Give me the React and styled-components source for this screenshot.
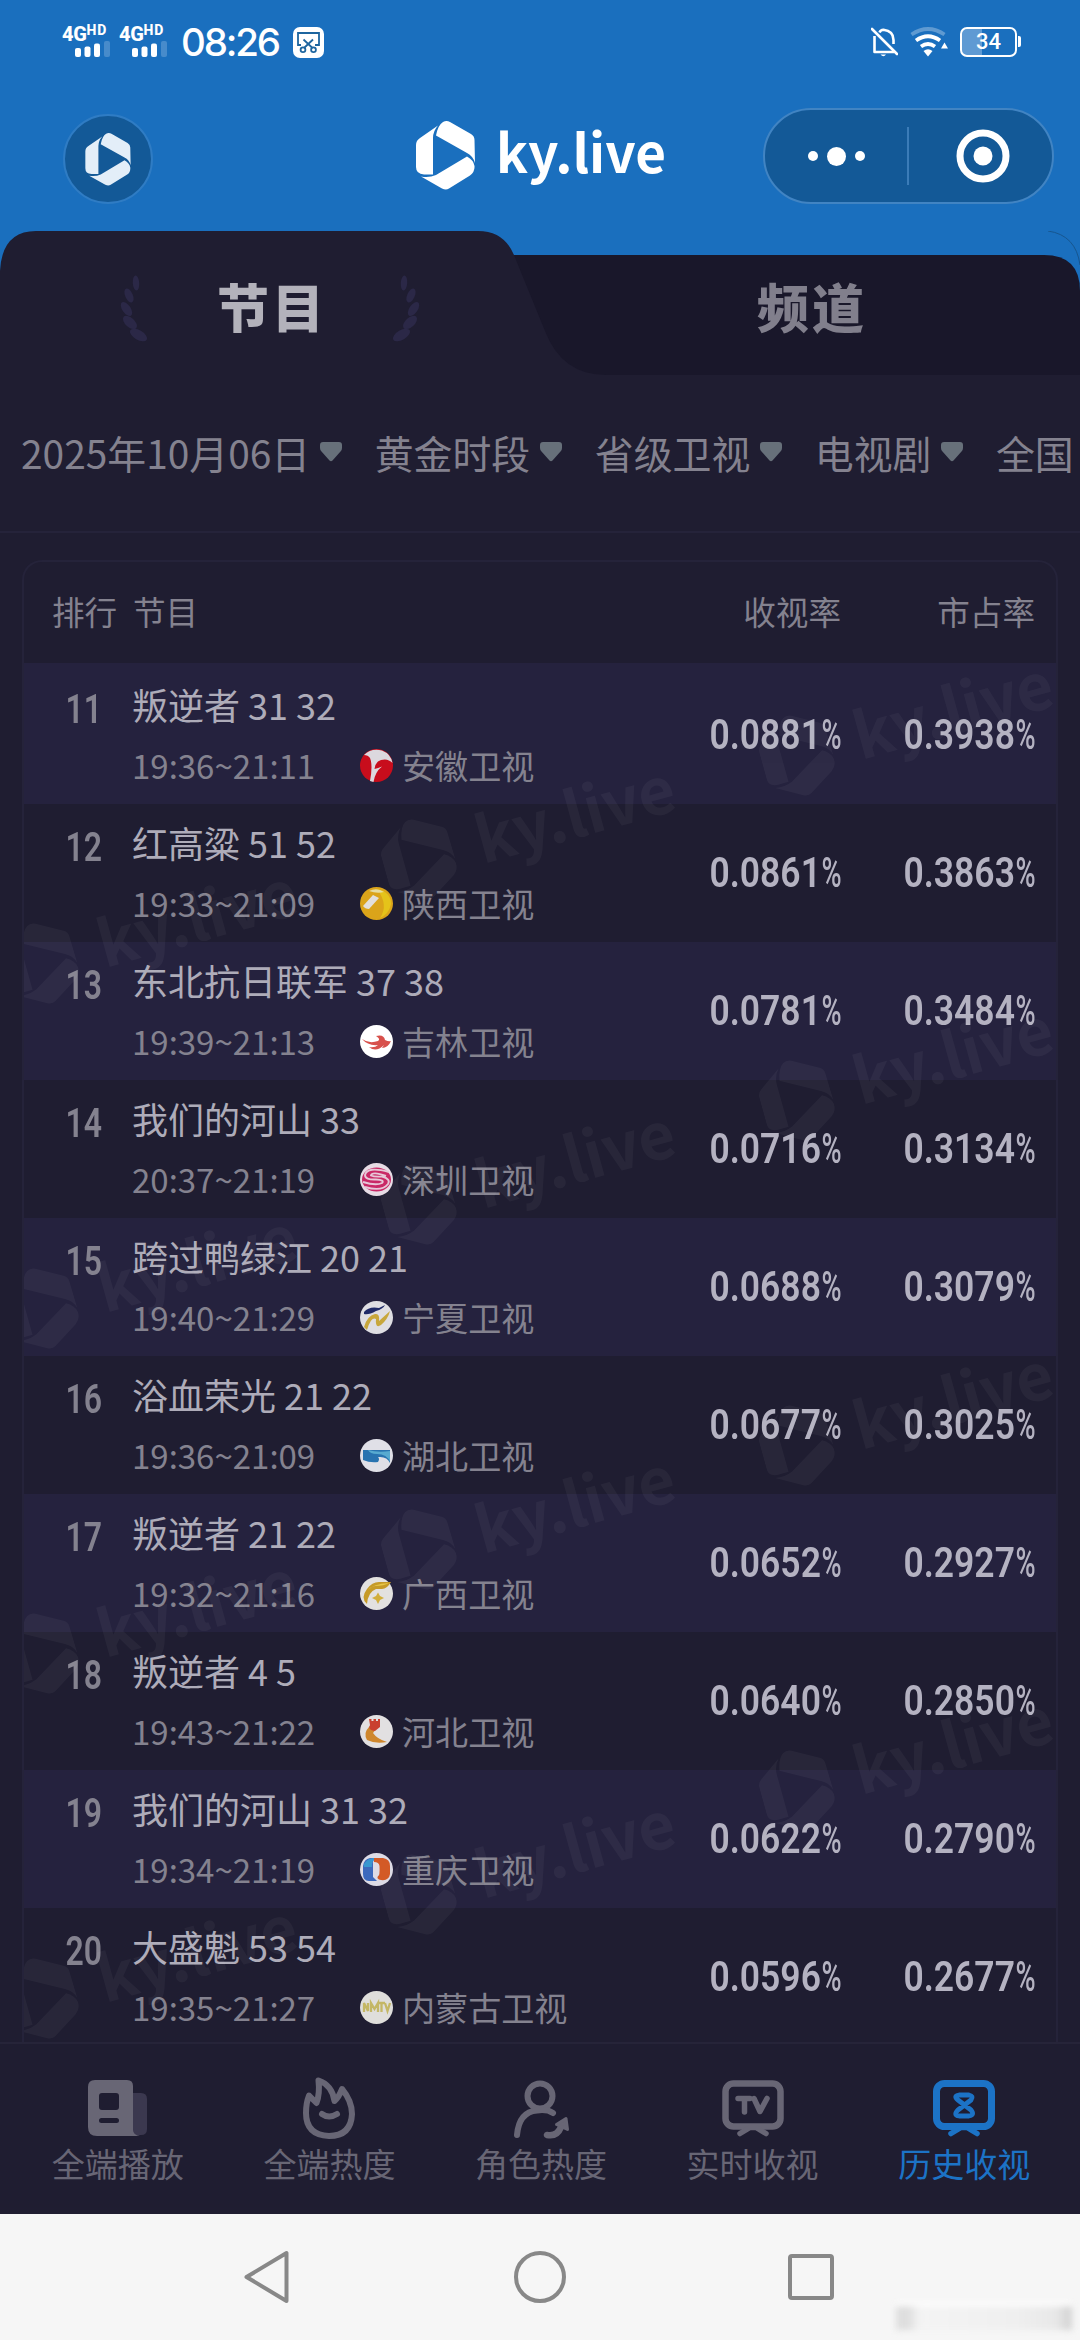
import React from 'react';
import styled, {createGlobalStyle} from 'styled-components';

const theme = {
    blue: '#1a6fbe',
    capsule: '#135997',
    dark: '#1f1d31',
    tabDark: '#19172a',
    stripe: '#25223e',
    line: '#25233a',
    title: '#aeacb9',
    value: '#b4b2c1',
    text: '#84828f',
    muted: '#686675',
    active: '#1c73c6',
}

const GlobalStyle = createGlobalStyle`
    * {
        box-sizing: border-box;
    }
    body {
        margin: 0;
        background: ${theme.dark};
        font-family: 'Noto Sans CJK SC', sans-serif;
    }
    svg {
        display: block;
        flex: none;
    }`

const Phone = styled.div`
    width: 1080px;
    height: 2340px;
    overflow: hidden;
    display: flex;
    flex-direction: column;
    background: ${theme.dark};`

/* ---------- top ---------- */

const StatusBar = styled.div`
    height: 84px;
    padding: 0 63px 0 62px;
    display: flex;
    align-items: center;
    background: ${theme.blue};
    color: #fff;
    > .spacer {
        flex: 1;
    }`

const Signal = styled.div`
    width: 57px;
    height: 34px;
    display: flex;
    flex-direction: column;
    > .net {
        display: flex;
        align-items: flex-start;
        height: 18px;
        font: 800 20px/18px Roboto, sans-serif;
        letter-spacing: -0.3px;
    }
    > .net > sup {
        font-size: 14px;
        line-height: 11px;
        letter-spacing: 0.7px;
        vertical-align: top;
    }
    > svg {
        margin-left: 13px;
        margin-top: -2px;
    }`

const Clock = styled.div`
    width: 117px;
    padding-left: 5px;
    font: 500 38.5px/40px Inter, sans-serif;
    letter-spacing: -2.2px;
    white-space: nowrap;`

const Battery = styled.div`
    position: relative;
    width: 57px;
    height: 30px;
    margin-left: 12px;
    border: 2.5px solid #fff;
    border-radius: 7px;
    background: linear-gradient(90deg, #5f9ad3 20px, transparent 20px);
    font: 500 22px/25px Roboto, sans-serif;
    text-align: center;
    &::after {
        content: '';
        position: absolute;
        right: -6px;
        top: 7px;
        width: 3px;
        height: 11px;
        border-radius: 0 2px 2px 0;
        background: #fff;
    }`

const AppBar = styled.div`
    height: 147px;
    padding: 24px 26px 0 63px;
    display: flex;
    align-items: flex-start;
    background: ${theme.blue};`

const RoundButton = styled.div`
    width: 90px;
    height: 90px;
    margin: 6px 263px 0 0;
    display: flex;
    align-items: center;
    justify-content: center;
    border: 2px solid #2f7cc4;
    border-radius: 50%;
    background: ${theme.capsule};`

const Brand = styled.div`
    width: 248px;
    height: 70px;
    display: flex;
    align-items: center;
    color: #fff;
    white-space: nowrap;
    > span {
        margin: -10px 0 0 21px;
        font: 700 53px/70px 'Noto Sans CJK SC', sans-serif;
    }`

const BrandSlot = styled.div`
    margin-top: 12px;
    margin-right: 99px;`

const Capsule = styled.div`
    width: 291px;
    height: 96px;
    display: flex;
    align-items: center;
    border: 2px solid #4184c3;
    border-radius: 48px;
    background: ${theme.capsule};
    > .dots {
        width: 142px;
        display: flex;
        align-items: center;
        justify-content: center;
        gap: 9px;
    }
    > .bar {
        width: 2px;
        height: 58px;
        background: #3b7cb8;
    }
    > .target {
        flex: 1;
        padding-left: 4px;
        display: flex;
        justify-content: center;
    }`

const Dot = styled.i`
    width: ${p => p.$size}px;
    height: ${p => p.$size}px;
    border-radius: 50%;
    background: #fff;`

/* ---------- tabs ---------- */

const Tabs = styled.div`
    position: relative;
    height: 144px;
    display: flex;
    background: ${theme.blue};
    > svg {
        position: absolute;
        left: 0;
        top: 0;
    }`

const Tab = styled.div`
    position: relative;
    flex: 1;
    height: 144px;
    display: flex;
    align-items: center;
    justify-content: center;
    gap: 62px;
    color: ${p => p.$active ? '#b3b2bb' : '#817f8c'};
    > span {
        margin-top: 6px;
        padding-left: 4px;
        font: 900 52px/60px 'Noto Sans CJK SC', sans-serif;
        letter-spacing: 3px;
    }
    > svg {
        margin-top: 12px;
    }`

const Filters = styled.div`
    height: 158px;
    padding: 0 0 3px 21px;
    display: flex;
    align-items: center;
    gap: 32.5px;
    overflow: hidden;
    border-bottom: 2px solid ${theme.line};
    color: ${theme.text};`

const Filter = styled.div`
    flex: none;
    display: flex;
    align-items: center;
    gap: 10px;
    font-size: 38.88px;
    line-height: 56px;
    white-space: nowrap;`

/* ---------- table ---------- */

const Card = styled.div`
    position: relative;
    height: 1482px;
    margin: 27px 22px 0;
    overflow: hidden;
    border: 2px solid ${theme.line};
    border-bottom: 0;
    border-radius: 20px 20px 0 0;`

const TableHead = styled.div`
    height: 101px;
    padding: 0 21px 3px 28px;
    display: flex;
    align-items: center;
    color: ${theme.text};
    font-size: 32.6px;
    line-height: 48px;
    > .rank {
        width: 81px;
    }
    > .name {
        flex: 1;
    }
    > .num {
        width: 194px;
        text-align: right;
    }`

const Row = styled.div`
    height: ${p => p.$first ? 141 : 138}px;
    padding: ${p => p.$first ? 3 : 0}px 21px 0 0;
    display: flex;
    background: ${p => p.$striped ? theme.stripe : 'transparent'};`

const Rank = styled.div`
    width: 108px;
    padding: 16px 0 0 11px;
    color: ${theme.text};
    font: 600 40px/56px Roboto, sans-serif;
    text-align: center;
    > span {
        display: inline-block;
        transform: scaleX(0.8);
    }`

const Program = styled.div`
    flex: 1;
    padding-top: 11px;
    white-space: nowrap;
    > .title {
        height: 54px;
        margin-bottom: 7px;
        color: ${theme.title};
        font-size: 36px;
        line-height: 54px;
    }
    > .info {
        height: 54px;
        display: flex;
        align-items: center;
        color: ${theme.text};
        font-size: 33.1px;
        line-height: 54px;
    }
    .time {
        width: 228px;
        font-size: 33px;
    }
    svg {
        margin: 1px 9px 0 0;
    }`

const Value = styled.div`
    width: ${p => p.$wide ? 194 : 160}px;
    height: 138px;
    display: flex;
    justify-content: flex-end;
    align-items: center;
    color: ${theme.value};
    font: 600 42px/50px Roboto, sans-serif;
    > span {
        transform: scaleX(0.845);
        transform-origin: right;
    }
    > .unit {
        width: 20.5px;
        display: flex;
        justify-content: flex-end;
        font-weight: 500;
        transform: scaleX(0.65);
    }`

// tilted brand laid over the rows
const Watermark = styled.div`
    position: absolute;
    left: ${p => p.$x - 124}px;
    top: ${p => p.$y - 35}px;
    opacity: 0.04;
    pointer-events: none;
    transform: rotate(-15.5deg) scale(1.2);`

/* ---------- bottom ---------- */

const NavBar = styled.div`
    height: 172px;
    padding: 0 10px 0 12px;
    display: flex;
    border-top: 2px solid #262439;
    background: ${theme.dark};`

const NavItem = styled.div`
    flex: 1;
    padding-top: 32px;
    display: flex;
    flex-direction: column;
    align-items: center;
    color: ${p => p.$active ? theme.active : theme.muted};
    font-size: 33px;
    line-height: 48px;
    > svg {
        margin-bottom: -1px;
    }`

const SystemBar = styled.div`
    position: relative;
    height: 126px;
    padding-left: 133px;
    display: flex;
    align-items: center;
    background: #f6f6f6;
    > div {
        width: 271px;
        display: flex;
        justify-content: center;
    }
    > .back {
        padding-right: 4px;
    }`

const Smudge = styled.span`
    position: absolute;
    right: 8px;
    bottom: 10px;
    width: 176px;
    height: 28px;
    border-top: 4px solid #fff;
    filter: blur(3px);
    background: linear-gradient(90deg, #dedede 12px, #f4f4f4 24px, #efefef 120px, #e8e8e8 160px, #d0d0d0);`

/* ---------- drawings ---------- */

const Hexagon = ({width = 59, height = 69, color = '#fff'}) => (
    <svg width={width} height={height} viewBox="0 0 59 69" fill={color}>
        <path d="M0 24Q0 19.500 4 17L22 4.500Q17 10 17 17V53.500H8Q0 53 0 46Z"/>
        <path d="M20 14.500Q22 4 27 1Q30.500-1 34 1L55 13Q58.500 15 58.500 19L59 42Q57 35 51 32Z"/>
        <path d="M51 35.500Q57.500 39 58.500 45Q59 51 54 54.500L33 67.500Q30 69.500 26 67.500L5 55.500Q13 57 20 54Z"/>
    </svg>
)

const Bars = () => (
    <svg width="36" height="16" viewBox="0 0 36 16" fill="#fff">
        <rect x="0" y="7" width="6" height="9" rx="2"/>
        <rect x="9.500" y="5.500" width="6" height="10.500" rx="2"/>
        <rect x="19" y="2.500" width="6" height="13.500" rx="2"/>
        <rect x="29" y="0" width="6" height="16" rx="2" opacity="0.2"/>
    </svg>
)

const Scissors = () => (
    <svg width="31" height="31" viewBox="0 0 31 31" fill="none" stroke="#1d659f" strokeWidth="1.800">
        <rect width="31" height="31" rx="7" fill="#fff" stroke="none"/>
        <path d="M8 18H5V6H26V18H22M10.500 12.500L19.500 21M20 12.500L11 21"/>
        <circle cx="10" cy="22.800" r="2.400"/>
        <circle cx="20.500" cy="22.800" r="2.400"/>
    </svg>
)

const Muted = () => (
    <svg width="27" height="30" viewBox="0 0 27 30" fill="none" stroke="#fff" strokeWidth="2.600">
        <path d="M1 2L26 27" strokeLinecap="round"/>
        <path d="M3.500 9V25H23M8.500 5.500Q9.500 3 12.500 2.800Q22.500 4 22.500 13V17" strokeLinejoin="round"/>
        <path d="M9.500 27.500H15Q12.500 31 9.500 27.500Z" fill="#fff" stroke="none"/>
    </svg>
)

const Wifi = () => (
    <svg width="38" height="30" viewBox="0 0 38 30" fill="none" stroke="#fff" strokeWidth="3.800">
        <path d="M1.500 7.500Q18 -3.500 34.500 7.500" opacity="0.3"/>
        <path d="M6 13.500Q18 5 30 13.500"/>
        <path d="M11 19.500Q18 14.500 25 19.500"/>
        <path d="M13.500 24Q18 20.500 22.500 24L18 29.500Z" fill="#fff" stroke="none"/>
        <path d="M34.500 15.500L38 21.500H31Z" fill="#fff" stroke="none"/>
    </svg>
)

const Laurel = ({flip}) => (
    <svg width="32" height="72" viewBox="0 0 32 72" fill="#2b2847">
        <g transform={flip ? 'translate(32 0) scale(-1 1)' : undefined}>
            <ellipse cx="17" cy="10" rx="3.200" ry="7.500" transform="rotate(-4 17 10)"/>
            <ellipse cx="10" cy="22.500" rx="3.800" ry="7.500" transform="rotate(-24 10 22.500)"/>
            <ellipse cx="7.500" cy="36" rx="4.200" ry="8" transform="rotate(-34 7.500 36)"/>
            <ellipse cx="11" cy="49.500" rx="4.600" ry="8.500" transform="rotate(-48 11 49.500)"/>
            <ellipse cx="19.500" cy="62" rx="4.800" ry="9.500" transform="rotate(-60 19.500 62)"/>
        </g>
    </svg>
)

const Arrow = () => (
    <svg width="22" height="20" viewBox="0 0 22 20">
        <path d="M3 0H19Q22 0 22 3V6Q22 8 20.500 9.500L12.500 18.500Q11 20 9.500 18.500L1.500 9.500Q0 8 0 6V3Q0 0 3 0Z" fill="#67707a"/>
    </svg>
)

const TabShape = () => (
    <svg width="1080" height="144" viewBox="0 0 1080 144">
        <path d="M480 24H1044Q1080 24 1080 60V144H480Z" fill={theme.tabDark}/>
        <path d="M0 144V40Q2 0 36 0H478Q504 0 514 24L545 100Q562 144 606 144Z" fill={theme.dark}/>
        <path d="M1048 0Q1076 4 1080 34" fill="none" stroke="#17568f" strokeWidth="1"/>
    </svg>
)

const channelMarks = {
    安徽卫视: <>
        <circle cx="16.500" cy="16.500" r="16.500" fill="#c80d1c"/>
        <path d="M4 6Q11-1 22 1.500Q31 5 32.500 14Q28 9 21 11Q15 13 14.500 20Q18 19 22 17.500Q15 23 13.500 33L10 32Q13 16 10 9Q8 6 4 6Z" fill="#dcd8de"/>
    </>,
    陕西卫视: <>
        <circle cx="16.500" cy="16.500" r="16.500" fill="#dba41a"/>
        <path d="M17 2Q31 5 31 17Q29 27 20 31Q29 18 17 2Z" fill="#e5c31a"/>
        <path d="M9 4Q17 0 24 5Q17 7 9 4Z" fill="#e6dda3"/>
        <path d="M3 19L13 8L19 11L9 22Q5 22 3 19Z" fill="#e2dfdb"/>
    </>,
    吉林卫视: <>
        <circle cx="16.500" cy="16.500" r="16.500" fill="#fff"/>
        <path d="M2 14Q9 19 18 16Q21 14 16 11Q24 9 25 15Q29 17 31 16Q28 23 22 23L24 20Q16 28 9 22Q15 23 18 20Q8 21 2 14Z" fill="#d8504b"/>
    </>,
    深圳卫视: <>
        <circle cx="16.500" cy="16.500" r="16.500" fill="#e7dce5"/>
        <ellipse cx="16.500" cy="16.500" rx="14.500" ry="12" fill="#c92866"/>
        <path d="M29 9Q7 3 5 12Q5 17 16 16.500Q25 17 22 20Q16 23 3 19M26 13Q12 8 11 12.500Q14 14 22 13.500Q31 16 28 21Q22 29 5 24" fill="none" stroke="#e7c7d8" strokeWidth="1.900"/>
    </>,
    宁夏卫视: <>
        <circle cx="16.500" cy="16.500" r="16.500" fill="#dfdee3"/>
        <path d="M4 11Q9 5 19 7L25 4Q23 8 16 10Q9 14 4 13Z" fill="#202a68"/>
        <path d="M4 26Q7 15 15 13Q20 12 19 20L30 10Q28 18 21 24Q15 28 16 18Q11 15 7 29Z" fill="#c8a73c"/>
    </>,
    湖北卫视: <>
        <circle cx="16.500" cy="16.500" r="16.500" fill="#e0e0e7"/>
        <path d="M3 11H30V24Q27 17 18 18Q20 20 18 23Q10 24 3 21Z" fill="#2873b0"/>
        <path d="M8 11Q18 14 30 12V23Q27 15 17 15Q10 15 8 11Z" fill="#57aad0"/>
    </>,
    广西卫视: <>
        <circle cx="16.500" cy="16.500" r="16.500" fill="#e3e1df"/>
        <path d="M7 27Q0 21 7 12Q12 5 19 5H31Q27 12 22 12H16Q8 15 7 27Z" fill="#c69a27"/>
        <path d="M8 13Q13 7 29 6Q24 9 15 9Q10 10 8 13Z" fill="#e7c847"/>
        <path d="M18 15.500L20 19L24 21L20 23L18 27L16 23L12 21L16 19Z" fill="#d2ae3b"/>
    </>,
    河北卫视: <>
        <circle cx="16.500" cy="16.500" r="16.500" fill="#e2e0e1"/>
        <path d="M9 12Q3 18 7 25Q15 29 27 27Q17 24 13 18L19 10H11Z" fill="#cf872d"/>
        <path d="M9 4H11.500V6H13.500V4H16V6H18V4H20V12L15 16Q7 15 10 10Z" fill="#c9402f"/>
    </>,
    重庆卫视: <>
        <circle cx="16.500" cy="16.500" r="16.500" fill="#dddbe5"/>
        <path d="M10 5H17Q12 7 13 11V24L17 28H9Q3 28 3 21V13Q4 6 10 5Z" fill="#3c69bd"/>
        <path d="M4 11Q8 4 16 5Q11 8 12 14H4Z" fill="#3897cf"/>
        <path d="M14 5H23Q30 6 30 13V21Q29 28 21 27Q16 26 18 23Q20 23 19.500 13Q19 9 14 9Z" fill="#d35a26"/>
    </>,
    内蒙古卫视: <>
        <circle cx="16.500" cy="16.500" r="16.500" fill="#dfdedb"/>
        <path d="M4 21V12L8 20V12M11 21V12L14.500 18L18 12V21M18 12H25M21.500 12V21M25 12L27.500 20L30 12" fill="none" stroke="#c4b765" strokeWidth="2.300"/>
    </>,
}

const navIcons = {
    全端播放: <>
        <path d="M46 17H54Q60 17 60 23V53Q60 59 54 59H40Z" fill="#3b384f"/>
        <path fillRule="evenodd" d="M8 4H40Q46 4 46 10V54Q46 59 53 60H10Q1 60 1 51V11Q1 4 8 4ZM15 17Q12 17 12 20V31Q12 34 15 34H29Q32 34 32 31V20Q32 17 29 17ZM14.500 42Q12 42 12 44.500T14.500 47H29.500Q32 47 32 44.500T29.500 42Z" fill="currentColor"/>
    </>,
    全端热度: <g fill="none" stroke="currentColor" strokeWidth="6" strokeLinecap="round" strokeLinejoin="round">
        <path d="M20.500 4.500Q34 9 36.500 25Q41 21 44 13Q54 25 54 38Q53 60 31 60Q8 59 8 37Q8 27 11 19.500L18.500 27Q22 18 20.500 4.500Z"/>
        <path d="M24 38Q31 43 39 38"/>
    </g>,
    角色热度: <g fill="none" stroke="currentColor" strokeWidth="6" strokeLinecap="round" strokeLinejoin="round">
        <circle cx="30" cy="20" r="12.500"/>
        <path d="M7 59Q9 36 27 34.500Q37 33 43 37"/>
        <path d="M37 59Q47 61 51 51" strokeWidth="6.500"/>
        <path d="M56 42.500L57.500 53.500L46.500 48.500Z" fill="currentColor" strokeWidth="3"/>
    </g>,
    实时收视: <g fill="none" stroke="currentColor" strokeWidth="6.500" strokeLinecap="round" strokeLinejoin="round">
        <rect x="3.500" y="7.500" width="55" height="43" rx="8"/>
        <path d="M18 57.500L28 51.500H34L44 57.500" strokeWidth="5.500"/>
        <path d="M16 22.500H28M22.500 22.500V36M32 22.500L38 35.500L45 22.500" strokeWidth="5.500"/>
    </g>,
    历史收视: <g fill="none" stroke="currentColor" strokeWidth="7" strokeLinecap="round" strokeLinejoin="round">
        <rect x="3.500" y="7.500" width="55" height="43" rx="8"/>
        <path d="M18 57.500L28 51.500H34L44 57.500" strokeWidth="5.500"/>
        <path d="M26 19H36Q41 20 38 24L25 34Q20 39 26 40H36Q42 39 38 34L25 24Q20 20 26 19Z" strokeWidth="4.800"/>
    </g>,
}

/* ---------- data ---------- */

const filters = ['2025年10月06日', '黄金时段', '省级卫视', '电视剧', '全国']

const programs = [
    {rank: 11, title: '叛逆者 31 32', time: '19:36~21:11', channel: '安徽卫视', rating: '0.0881', share: '0.3938'},
    {rank: 12, title: '红高粱 51 52', time: '19:33~21:09', channel: '陕西卫视', rating: '0.0861', share: '0.3863'},
    {rank: 13, title: '东北抗日联军 37 38', time: '19:39~21:13', channel: '吉林卫视', rating: '0.0781', share: '0.3484'},
    {rank: 14, title: '我们的河山 33', time: '20:37~21:19', channel: '深圳卫视', rating: '0.0716', share: '0.3134'},
    {rank: 15, title: '跨过鸭绿江 20 21', time: '19:40~21:29', channel: '宁夏卫视', rating: '0.0688', share: '0.3079'},
    {rank: 16, title: '浴血荣光 21 22', time: '19:36~21:09', channel: '湖北卫视', rating: '0.0677', share: '0.3025'},
    {rank: 17, title: '叛逆者 21 22', time: '19:32~21:16', channel: '广西卫视', rating: '0.0652', share: '0.2927'},
    {rank: 18, title: '叛逆者 4 5', time: '19:43~21:22', channel: '河北卫视', rating: '0.0640', share: '0.2850'},
    {rank: 19, title: '我们的河山 31 32', time: '19:34~21:19', channel: '重庆卫视', rating: '0.0622', share: '0.2790'},
    {rank: 20, title: '大盛魁 53 54', time: '19:35~21:27', channel: '内蒙古卫视', rating: '0.0596', share: '0.2677'},
]

const navs = ['全端播放', '全端热度', '角色热度', '实时收视', '历史收视']

// three columns, each one lower than the next by the same slope
const watermarks = [0, 1, 2, 3].flatMap(i => [
    [882, 163 + i * 345],
    [504, 267 + i * 345],
    [126, 371 + i * 345],
])

const Logo = () => (
    <Brand>
        <Hexagon/>
        <span>ky.live</span>
    </Brand>
)

const Percent = ({value, wide}) => (
    <Value $wide={wide}>
        <span>{value}</span>
        <span className={'unit'}>%</span>
    </Value>
)

export default function App() {
    return (
        <Phone>
            <GlobalStyle/>
            <StatusBar>
                <Signal><div className={'net'}>4G<sup>HD</sup></div><Bars/></Signal>
                <Signal><div className={'net'}>4G<sup>HD</sup></div><Bars/></Signal>
                <Clock>08:26</Clock>
                <Scissors/>
                <div className={'spacer'}/>
                <Muted/>
                <div style={{width: 12}}/>
                <Wifi/>
                <Battery>34</Battery>
            </StatusBar>

            <AppBar>
                <RoundButton><Hexagon width={46} height={53} color={'#e3eef8'}/></RoundButton>
                <BrandSlot><Logo/></BrandSlot>
                <Capsule>
                    <div className={'dots'}><Dot $size={10}/><Dot $size={19}/><Dot $size={10}/></div>
                    <div className={'bar'}/>
                    <div className={'target'}>
                        <svg width="54" height="54" viewBox="0 0 54 54">
                            <circle cx="27" cy="27" r="23" fill="none" stroke="#fff" strokeWidth="7"/>
                            <circle cx="27" cy="27" r="9.500" fill="#fff"/>
                        </svg>
                    </div>
                </Capsule>
            </AppBar>

            <Tabs>
                <TabShape/>
                <Tab $active><Laurel/><span>节目</span><Laurel flip/></Tab>
                <Tab><span>频道</span></Tab>
            </Tabs>

            <Filters>
                {filters.map(f => <Filter key={f}>{f}<Arrow/></Filter>)}
            </Filters>

            <Card>
                <TableHead>
                    <div className={'rank'}>排行</div>
                    <div className={'name'}>节目</div>
                    <div className={'num'}>收视率</div>
                    <div className={'num'}>市占率</div>
                </TableHead>
                {programs.map((item, i) => (
                    <Row key={item.rank} $first={i === 0} $striped={i % 2 === 0}>
                        <Rank><span>{item.rank}</span></Rank>
                        <Program>
                            <div className={'title'}>{item.title}</div>
                            <div className={'info'}>
                                <div className={'time'}>{item.time}</div>
                                <svg width="33" height="33" viewBox="0 0 33 33">{channelMarks[item.channel]}</svg>
                                {item.channel}
                            </div>
                        </Program>
                        <Percent value={item.rating}/>
                        <Percent value={item.share} wide/>
                    </Row>
                ))}
                {watermarks.map(([x, y]) => (
                    <Watermark key={`${x}-${y}`} $x={x} $y={y}><Logo/></Watermark>
                ))}
            </Card>

            <NavBar>
                {navs.map(name => (
                    <NavItem key={name} $active={name === '历史收视'}>
                        <svg width="62" height="64" viewBox="0 0 62 64">{navIcons[name]}</svg>
                        {name}
                    </NavItem>
                ))}
            </NavBar>

            <SystemBar>
                <div className={'back'}>
                    <svg width="46" height="54" viewBox="0 0 46 54">
                        <path d="M42.500 3V51L2.500 27Z" fill="none" stroke="#888" strokeWidth="4" strokeLinejoin="round"/>
                    </svg>
                </div>
                <div>
                    <svg width="54" height="54" viewBox="0 0 54 54">
                        <circle cx="27" cy="27" r="24" fill="none" stroke="#888" strokeWidth="4"/>
                    </svg>
                </div>
                <div>
                    <svg width="48" height="48" viewBox="0 0 48 48">
                        <rect x="3" y="3" width="42" height="42" rx="2" fill="none" stroke="#888" strokeWidth="4"/>
                    </svg>
                </div>
                <Smudge/>
            </SystemBar>
        </Phone>
    );
};
